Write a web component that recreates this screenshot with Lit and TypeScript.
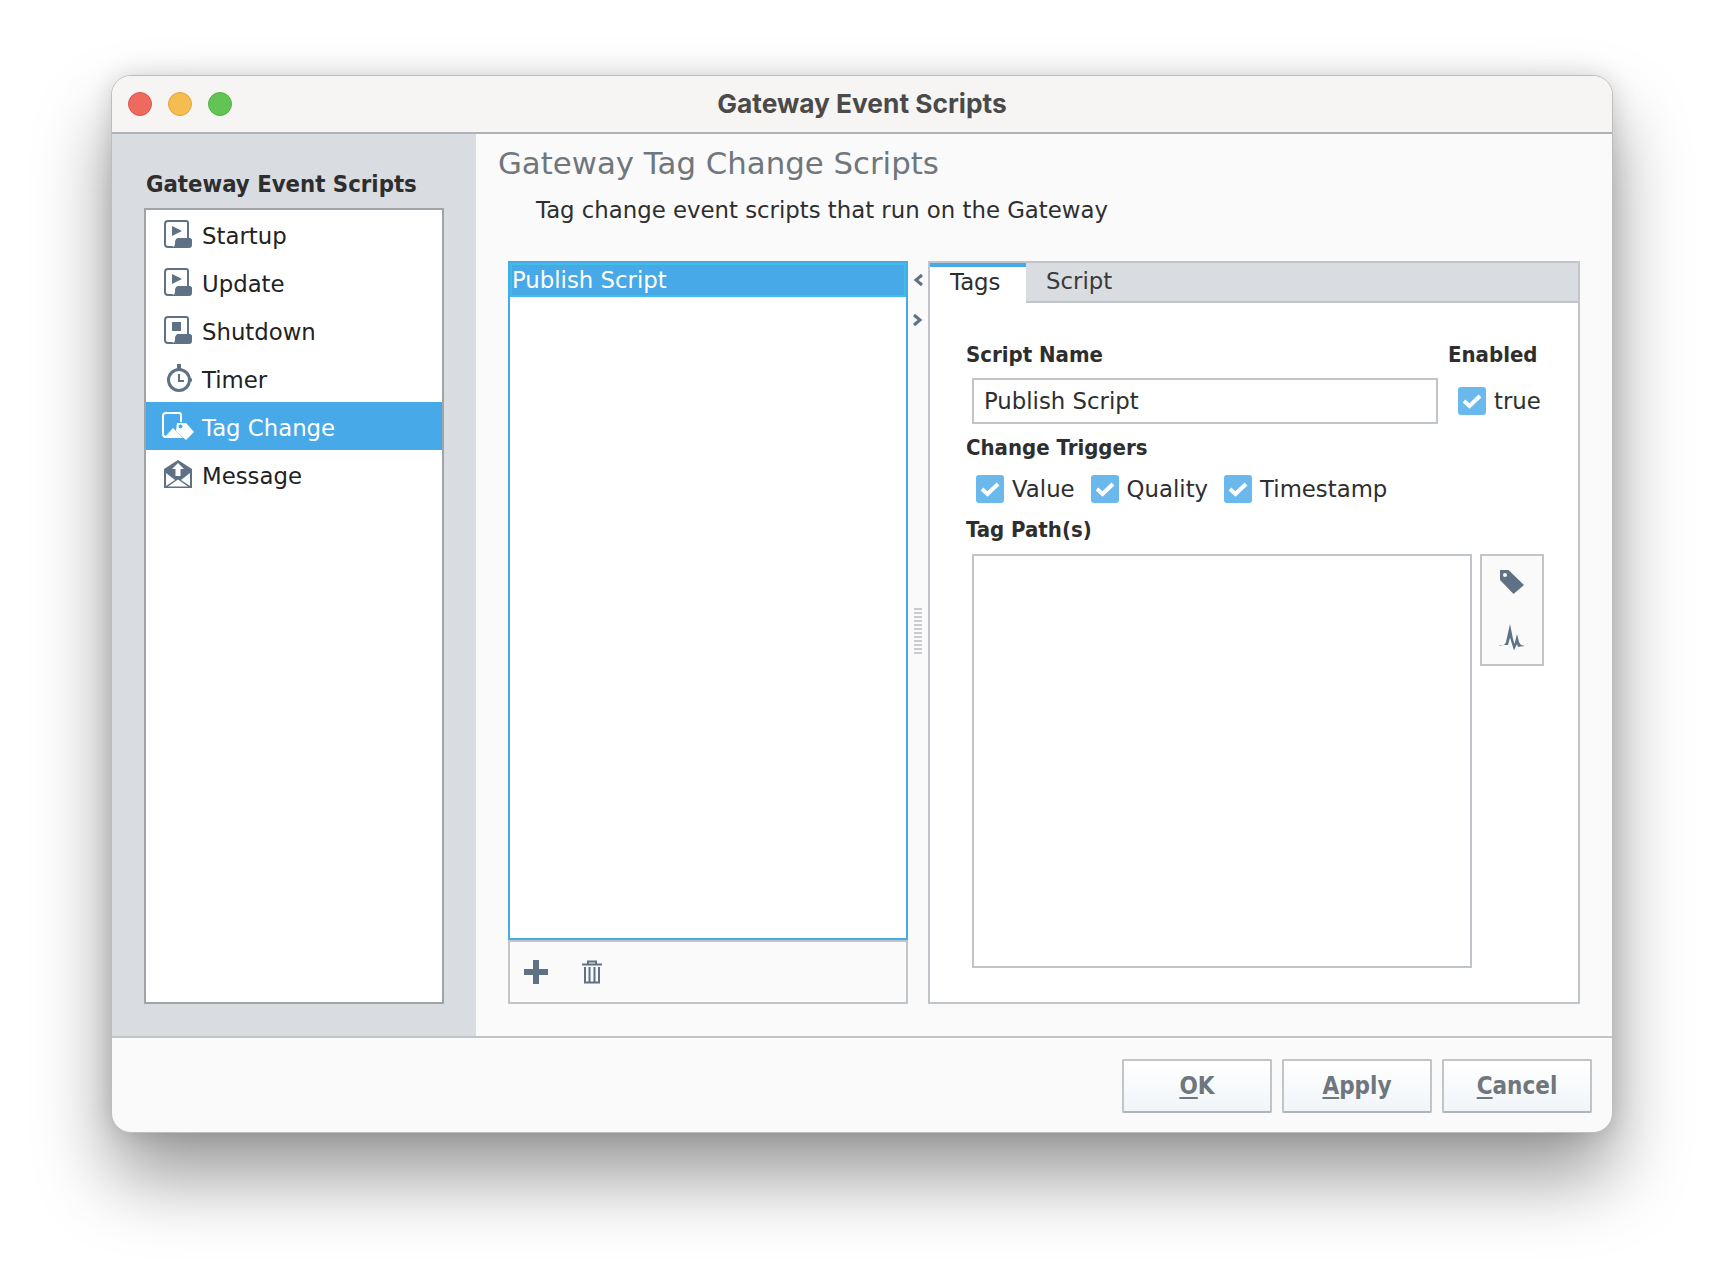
import { LitElement, html, css, svg, TemplateResult } from "lit";
import { customElement, state } from "lit/decorators.js";

const docIcon = (inner: TemplateResult) => html`<svg class="icon" viewBox="0 0 28 28">
  <path d="M9 27H4a3 3 0 0 1-3-3V4a3 3 0 0 1 3-3h18a2 2 0 0 1 2 2v15" fill="none" stroke="currentColor" stroke-width="2"/>
  <path d="M8 27c2 0 3-1 3-4 0-3 1-5 4-5h11c1 0 2 1 2 2v5c0 2-1 3-3 3H8z" fill="currentColor"/>
  ${inner}
</svg>`;

const ICONS: Record<string, () => TemplateResult> = {
  start: () => docIcon(svg`<path d="M8 6l10 5-10 5z" fill="currentColor"/>`),
  stop: () => docIcon(svg`<rect x="8" y="6" width="9" height="9" fill="currentColor"/>`),
  timer: () => html`<svg class="icon" viewBox="0 0 28 28">
    <rect x="13" y="0" width="4" height="5" fill="currentColor"/>
    <circle cx="15" cy="16" r="10.5" fill="none" stroke="currentColor" stroke-width="3"/>
    <rect x="25" y="14.5" width="3" height="3" fill="currentColor"/>
    <path d="M15 10v7h5" fill="none" stroke="currentColor" stroke-width="2"/>
  </svg>`,
  tag: () => html`<svg class="icon wide" viewBox="0 0 32 28">
    <path d="M8 25H4a3 3 0 0 1-3-3V4a3 3 0 0 1 3-3h13a2 2 0 0 1 2 2v7" fill="none" stroke="currentColor" stroke-width="2"/>
    <path d="M2 26l9-10 5 5 5 5z" fill="currentColor"/>
    <path d="M15 11h9l8 9-8 8-10-9z" fill="currentColor"/>
    <circle cx="18.5" cy="14.5" r="2" fill="#47a9e8"/>
  </svg>`,
  message: () => html`<svg class="icon" viewBox="0 0 28 28">
    <path d="M0 9l14-9 14 9v19H0z" fill="currentColor"/>
    <path d="M2 13l9 7-9 6zM26 13l-9 7 9 6zM4 26.5l10-7 10 7z" fill="#fff"/>
    <path d="M14 3l6 6h-3.500v7h-5V9H8z" fill="#fff"/>
  </svg>`,
};

@customElement("app-root")
export class AppRoot extends LitElement {
  @state() private scripts = [
    { name: "Startup", icon: "start" },
    { name: "Update", icon: "start" },
    { name: "Shutdown", icon: "stop" },
    { name: "Timer", icon: "timer" },
    { name: "Tag Change", icon: "tag" },
    { name: "Message", icon: "message" },
  ];

  static styles = css`
    :host {
      display: block;
      width: 1724px;
      height: 1280px;
      box-sizing: border-box;
      padding: 75px 0 0 111px;
      background: #fff;
      font-family: "DejaVu Sans", sans-serif;
      font-size: 22.8px;
      color: #2b2b2b;
      overflow: hidden;
    }
    .window {
      width: 1502px;
      height: 1058px;
      box-sizing: border-box;
      display: flex;
      flex-direction: column;
      border-radius: 20px;
      border: 1px solid #bdbdbd;
      background: #fafafa;
      box-shadow: 0 44px 76px rgba(0, 0, 0, 0.4), 0 0 24px rgba(0, 0, 0, 0.14);
      overflow: hidden;
    }
    .titlebar {
      flex: none;
      height: 56px;
      display: flex;
      align-items: center;
      position: relative;
      background: #f6f5f4;
      border-bottom: 2px solid #b0b3b6;
      padding-left: 16px;
      gap: 16px;
    }
    .light {
      width: 24px;
      height: 24px;
      border-radius: 50%;
      box-sizing: border-box;
    }
    .red { background: #ee6a5f; border: 1px solid #d9564b; }
    .yellow { background: #f5bd4f; border: 1px solid #dfa63a; }
    .green { background: #61c454; border: 1px solid #52b045; }
    .title {
      position: absolute;
      inset: 0 0 2px 0;
      display: flex;
      align-items: center;
      justify-content: center;
      font-family: Inter, sans-serif;
      font-weight: 700;
      font-size: 26.3px;
      color: #4a4a4a;
    }
    .body {
      flex: none;
      height: 902px;
      display: flex;
      border-bottom: 2px solid #c0c5ca;
    }
    .side {
      flex: none;
      width: 364px;
      box-sizing: border-box;
      background: #d9dce0;
      padding: 33px 32px 32px;
      display: flex;
      flex-direction: column;
    }
    .side h2 {
      margin: 0 0 7px 2px;
      font-family: "DejaVu Sans Condensed", "DejaVu Sans", sans-serif;
      font-size: 23.7px;
      line-height: 34px;
      font-weight: 700;
      white-space: nowrap;
      color: #2e2e2e;
    }
    .nav {
      flex: 1;
      background: #fff;
      border: 2px solid #9fa4a9;
    }
    .nav-row {
      height: 48px;
      display: flex;
      align-items: center;
      color: #222;
      padding-left: 18px;
    }
    .nav-row span { padding-top: 4px; }
    .nav-row svg { color: #5f7285; margin-right: 10px; }
    .nav-row .wide { margin-left: -2px; margin-right: 8px; }
    .nav-row.on { background: #47a9e8; color: #fff; }
    .nav-row.on svg { color: #fff; }
    .icon { width: 28px; height: 28px; flex: none; display: block; }
    .icon.wide { width: 32px; }

    .main {
      flex: 1;
      min-width: 0;
      display: flex;
      flex-direction: column;
      padding: 5px 32px 32px 22px;
    }
    .main h1 {
      margin: 0;
      font-size: 30.8px;
      line-height: 48px;
      font-weight: 400;
      color: #6f767c;
    }
    .desc {
      margin: 6px 0 0 38px;
      line-height: 34px;
      color: #2e2e2e;
    }
    .panes {
      flex: 1;
      min-height: 0;
      margin: 34px 0 0 10px;
      display: flex;
    }
    .left {
      flex: none;
      width: 400px;
      display: flex;
      flex-direction: column;
    }
    .list {
      flex: 1;
      background: #fff;
      border: 2px solid #47a9e8;
    }
    .list-row {
      height: 30px;
      display: flex;
      align-items: center;
      background: #47a9e8;
      border: 2px solid #3ebde6;
      color: #fff;
    }
    .toolbar {
      flex: none;
      height: 64px;
      box-sizing: border-box;
      border: 2px solid #c0c5ca;
      background: #fafafa;
      display: flex;
      align-items: center;
      gap: 32px;
      padding-left: 14px;
      color: #5f7285;
    }
    .toolbar svg { display: block; width: 24px; height: 24px; }
    .split {
      flex: none;
      width: 20px;
      position: relative;
      display: flex;
      align-items: center;
      justify-content: center;
    }
    .arrow {
      position: absolute;
      width: 12px;
      height: 14px;
      color: #5f7285;
    }
    .arrow.a { top: 12px; left: 5px; }
    .arrow.b { top: 52px; left: 3px; }
    .grip {
      display: flex;
      flex-direction: column;
      gap: 2px;
      margin-left: -1px;
      margin-top: -4px;
    }
    .grip i { display: block; width: 8px; height: 2px; background: #c8cacd; }
    .tabs {
      flex: 1;
      min-width: 0;
      border: 2px solid #c0c5ca;
      background: #fff;
      display: flex;
      flex-direction: column;
    }
    .tabbar {
      flex: none;
      height: 40px;
      display: flex;
      background: #d9dce0;
    }
    .tab {
      display: flex;
      align-items: center;
      box-sizing: border-box;
      height: 40px;
      padding: 0 0 2px 20px;
      color: #3a3a3a;
      border-bottom: 2px solid #c0c5ca;
    }
    .tab.on {
      width: 96px;
      padding-left: 20px;
      padding-bottom: 6px;
      background: #fff;
      color: #2e2e2e;
      border-top: 4px solid #47a9e8;
      border-bottom: 0;
    }
    .tab-fill { flex: 1; border-bottom: 2px solid #c0c5ca; }
    .form {
      flex: 1;
      display: grid;
      grid-template-columns: 466px 1fr;
      grid-auto-rows: min-content;
      padding: 37px 0 0 36px;
    }
    .label {
      font-family: "DejaVu Sans Condensed", "DejaVu Sans", sans-serif;
      font-size: 22px;
      font-weight: 700;
      line-height: 30px;
      color: #2e2e2e;
    }
    .enabled-label { margin-left: 16px; }
    .input {
      margin: 8px 0 0 6px;
      width: 466px;
      height: 46px;
      box-sizing: border-box;
      border: 2px solid #c0c5ca;
      display: flex;
      align-items: center;
      padding-left: 10px;
      color: #2e2e2e;
    }
    .check-line {
      display: flex;
      align-items: center;
      gap: 8px;
      color: #2e2e2e;
    }
    .enabled-check { margin: 8px 0 0 26px; }
    .box {
      width: 28px;
      height: 28px;
      flex: none;
      border-radius: 3px;
      background: #6bb8ec;
      display: flex;
      align-items: center;
      justify-content: center;
    }
    .box svg { width: 22px; height: 18px; display: block; }
    .full { grid-column: 1 / -1; }
    .triggers-label { margin-top: 9px; }
    .triggers {
      display: flex;
      align-items: center;
      gap: 16px;
      margin: 12px 0 0 10px;
      height: 28px;
    }
    .paths-label { margin-top: 12px; }
    .paths {
      margin: 9px 0 0 6px;
      display: flex;
      align-items: flex-start;
      gap: 8px;
    }
    .area {
      width: 500px;
      height: 414px;
      box-sizing: border-box;
      border: 2px solid #c0c5ca;
      background: #fff;
    }
    .tools {
      width: 64px;
      height: 112px;
      box-sizing: border-box;
      border: 2px solid #c0c5ca;
      background: #fafafa;
      display: flex;
      flex-direction: column;
      align-items: center;
      padding-top: 14px;
      gap: 30px;
      color: #5f7285;
    }
    .tools svg { display: block; }
    .tag-tool { width: 24px; height: 24px; }
    .pulse-tool { width: 26px; height: 26px; }
    .footer {
      flex: 1;
      display: flex;
      justify-content: flex-end;
      align-items: flex-start;
      gap: 10px;
      padding: 21px 20px 0 0;
    }
    .btn {
      width: 150px;
      height: 54px;
      box-sizing: border-box;
      border: 2px solid #c2c4c6;
      border-bottom-color: #b0b4b8;
      border-radius: 2px;
      background: linear-gradient(#fff, #f1f5f9);
      display: flex;
      align-items: center;
      justify-content: center;
      font-family: "DejaVu Sans Condensed", "DejaVu Sans", sans-serif;
      font-size: 24px;
      font-weight: 700;
      color: #6f767c;
      padding: 0;
    }
    .btn u { text-underline-offset: 3px; text-decoration-thickness: 2px; }
  `;

  private check(label: string) {
    return html`<div class="check-line">
      <span class="box"><svg viewBox="0 0 22 18"><path d="M3 9l5.500 5L19 4" fill="none" stroke="#fff" stroke-width="4"/></svg></span>
      <span>${label}</span>
    </div>`;
  }

  render() {
    return html`<div class="window">
      <div class="titlebar">
        <div class="title">Gateway Event Scripts</div>
        <span class="light red"></span>
        <span class="light yellow"></span>
        <span class="light green"></span>
      </div>
      <div class="body">
        <div class="side">
          <h2>Gateway Event Scripts</h2>
          <div class="nav">
            ${this.scripts.map(
              (s) => html`<div class="nav-row ${s.name === "Tag Change" ? "on" : ""}">
                ${ICONS[s.icon]()}<span>${s.name}</span>
              </div>`
            )}
          </div>
        </div>
        <div class="main">
          <h1>Gateway Tag Change Scripts</h1>
          <div class="desc">Tag change event scripts that run on the Gateway</div>
          <div class="panes">
            <div class="left">
              <div class="list"><div class="list-row">Publish Script</div></div>
              <div class="toolbar">
                <svg viewBox="0 0 24 24"><path d="M9 0h6v9h9v6h-9v9H9v-9H0V9h9z" fill="currentColor"/></svg>
                <svg viewBox="0 0 24 24">
                  <path d="M2 4.500h20M8 4V1.500h8V4" fill="none" stroke="currentColor" stroke-width="2"/>
                  <path d="M5 7v15.500h14V7M9.500 7v15M14.500 7v15" fill="none" stroke="currentColor" stroke-width="2"/>
                </svg>
              </div>
            </div>
            <div class="split">
              <svg class="arrow a" viewBox="0 0 12 14"><path d="M9 2L3 7l6 5" fill="none" stroke="currentColor" stroke-width="3"/></svg>
              <svg class="arrow b" viewBox="0 0 12 14"><path d="M3 2l6 5-6 5" fill="none" stroke="currentColor" stroke-width="3"/></svg>
              <div class="grip">${Array.from({ length: 12 }, () => html`<i></i>`)}</div>
            </div>
            <div class="tabs">
              <div class="tabbar">
                <div class="tab on">Tags</div>
                <div class="tab">Script</div>
                <div class="tab-fill"></div>
              </div>
              <div class="form">
                <div class="label">Script Name</div>
                <div class="label enabled-label">Enabled</div>
                <div class="input">Publish Script</div>
                <div class="check-line enabled-check">
                  <span class="box"><svg viewBox="0 0 22 18"><path d="M3 9l5.500 5L19 4" fill="none" stroke="#fff" stroke-width="4"/></svg></span>
                  <span>true</span>
                </div>
                <div class="label full triggers-label">Change Triggers</div>
                <div class="full triggers">
                  ${this.check("Value")}${this.check("Quality")}${this.check("Timestamp")}
                </div>
                <div class="label full paths-label">Tag Path(s)</div>
                <div class="full paths">
                  <div class="area"></div>
                  <div class="tools">
                    <svg class="tag-tool" viewBox="0 0 24 24"><path d="M0 0h8.500L24 15l-10.500 9L0 10z" fill="currentColor"/><circle cx="5" cy="5" r="2" fill="#fafafa"/></svg>
                    <svg class="pulse-tool" viewBox="0 0 26 26"><path d="M0 22c4-.5 6-1 7-4l4-18 3 15 1.500 5 2.500-10 2 8c1 3 3 3.500 6 4-3 .5-6 .5-7 1l-1-3-3 6.500-2.500-8-1.500-5-2 7.500c-3 0-6 0-9 .5z" fill="currentColor"/></svg>
                  </div>
                </div>
              </div>
            </div>
          </div>
        </div>
      </div>
      <div class="footer">
        <button class="btn"><span><u>O</u>K</span></button>
        <button class="btn"><span><u>A</u>pply</span></button>
        <button class="btn"><span><u>C</u>ancel</span></button>
      </div>
    </div>`;
  }
}
